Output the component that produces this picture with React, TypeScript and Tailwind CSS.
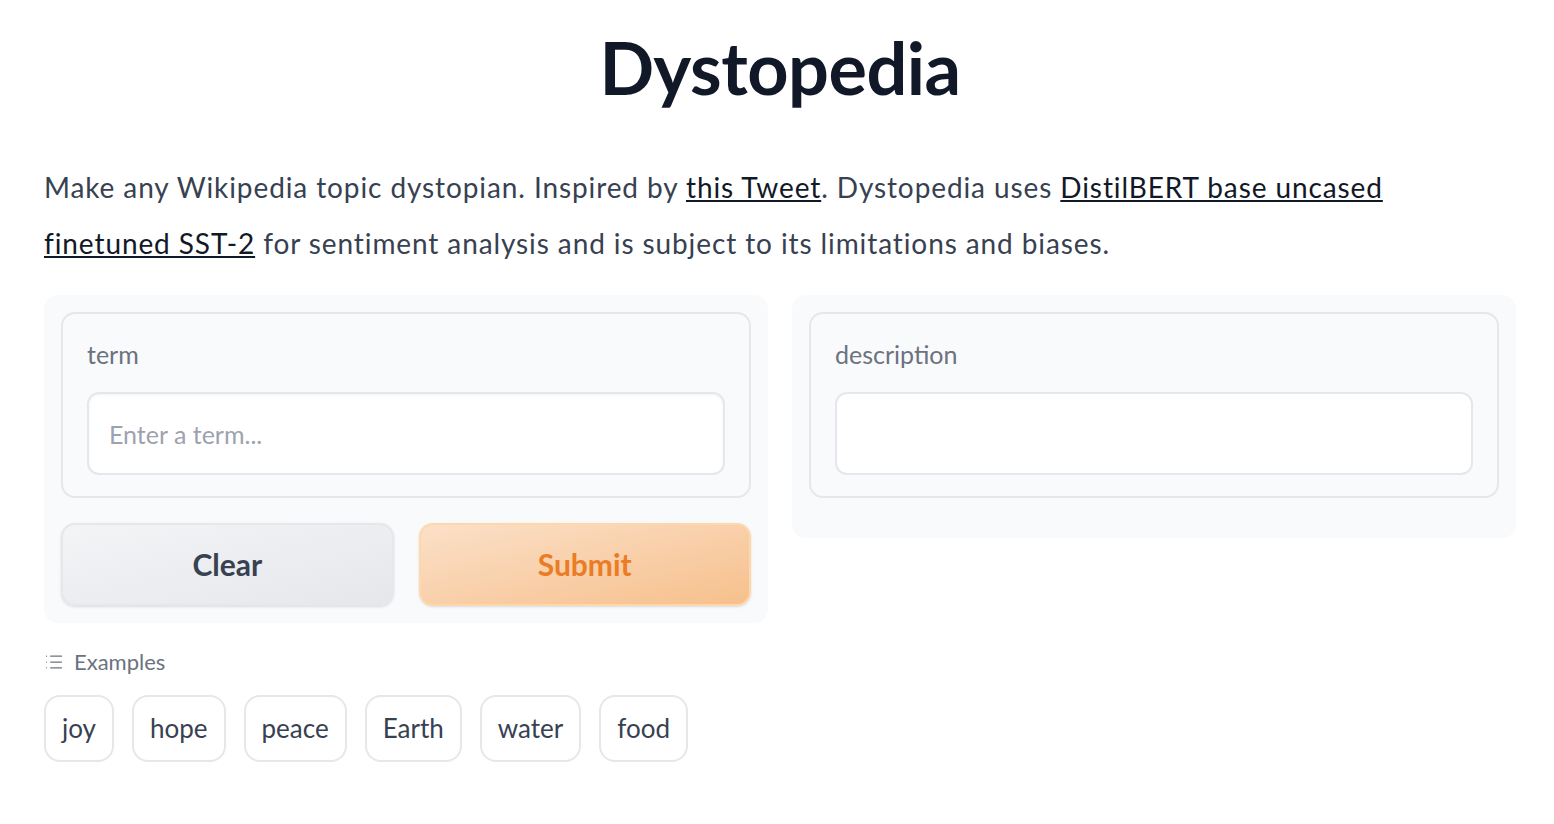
import { List } from 'lucide-react';

const font = { fontFamily: 'Lato, "Noto Sans", sans-serif' };

function Label({ children }: { children: string }) {
  return <div className="text-[25px] text-[#6b7280] leading-none mb-[25px]">{children}</div>;
}

export default function App() {
  const examples = ['joy', 'hope', 'peace', 'Earth', 'water', 'food'];
  return (
    <div className="min-h-screen bg-white pl-[44px] pr-[38px] pt-[27px]" style={font}>
      <h1 className="text-center text-[72px] font-bold text-[#111827] leading-[80px] tracking-[-0.5px]">
        Dystopedia
      </h1>

      <p className="mt-[52px] text-[28px] leading-[56px] text-[#374151] tracking-[0.9px] pr-[60px]">
        Make any Wikipedia topic dystopian. Inspired by{' '}
        <a href="#" className="underline text-[#111827]">this Tweet</a>. Dystopedia uses{' '}
        <a href="#" className="underline text-[#111827]">DistilBERT base uncased finetuned SST-2</a>{' '}
        for sentiment analysis and is subject to its limitations and biases.
      </p>

      <div className="mt-[24px] grid grid-cols-2 gap-[24px] items-start">
        {/* Input column */}
        <div className="bg-[#f9fafb] rounded-[14px] p-[17px]">
          <div className="border-2 border-[#e5e7eb] rounded-[14px] px-[24px] pt-[28px] pb-[21px]">
            <Label>term</Label>
            <input
              placeholder="Enter a term..."
              className="w-full h-[83px] bg-white border-2 border-[#e5e7eb] rounded-[12px] px-[20px] text-[25px] text-[#374151] placeholder-[#9ca3af] shadow-[inset_0_1px_3px_rgba(0,0,0,0.05)] focus:outline-none"
              style={font}
            />
          </div>
          <div className="grid grid-cols-2 gap-[25px] mt-[25px]">
            <button
              className="h-[83px] rounded-[14px] border-2 border-[#e5e7eb] bg-gradient-to-br from-[#f3f4f6] to-[#e5e7eb] text-[30px] font-bold text-[#374151] shadow-sm"
              style={font}
            >
              Clear
            </button>
            <button
              className="h-[83px] rounded-[14px] border-2 border-[#fed7aa] bg-gradient-to-br from-[#fbe0c8] to-[#f6c08c] text-[30px] font-bold text-[#ea7c26] shadow-sm"
              style={font}
            >
              Submit
            </button>
          </div>
        </div>

        {/* Output column */}
        <div className="bg-[#f9fafb] rounded-[14px] p-[17px] pb-[40px]">
          <div className="border-2 border-[#e5e7eb] rounded-[14px] px-[24px] pt-[28px] pb-[21px]">
            <Label>description</Label>
            <div className="w-full h-[83px] bg-white border-2 border-[#e5e7eb] rounded-[12px]" />
          </div>
        </div>
      </div>

      <div className="mt-[22px] flex items-center gap-[10px] text-[#6b7280] text-[22px]">
        <List size={20} strokeWidth={1.5} />
        <span>Examples</span>
      </div>
      <div className="mt-[17px] flex gap-[18px]">
        {examples.map((e) => (
          <button
            key={e}
            className="h-[67px] px-[16px] rounded-[16px] border-2 border-[#e5e7eb] bg-white text-[26px] text-[#374151]"
            style={font}
          >
            {e}
          </button>
        ))}
      </div>
    </div>
  );
}
